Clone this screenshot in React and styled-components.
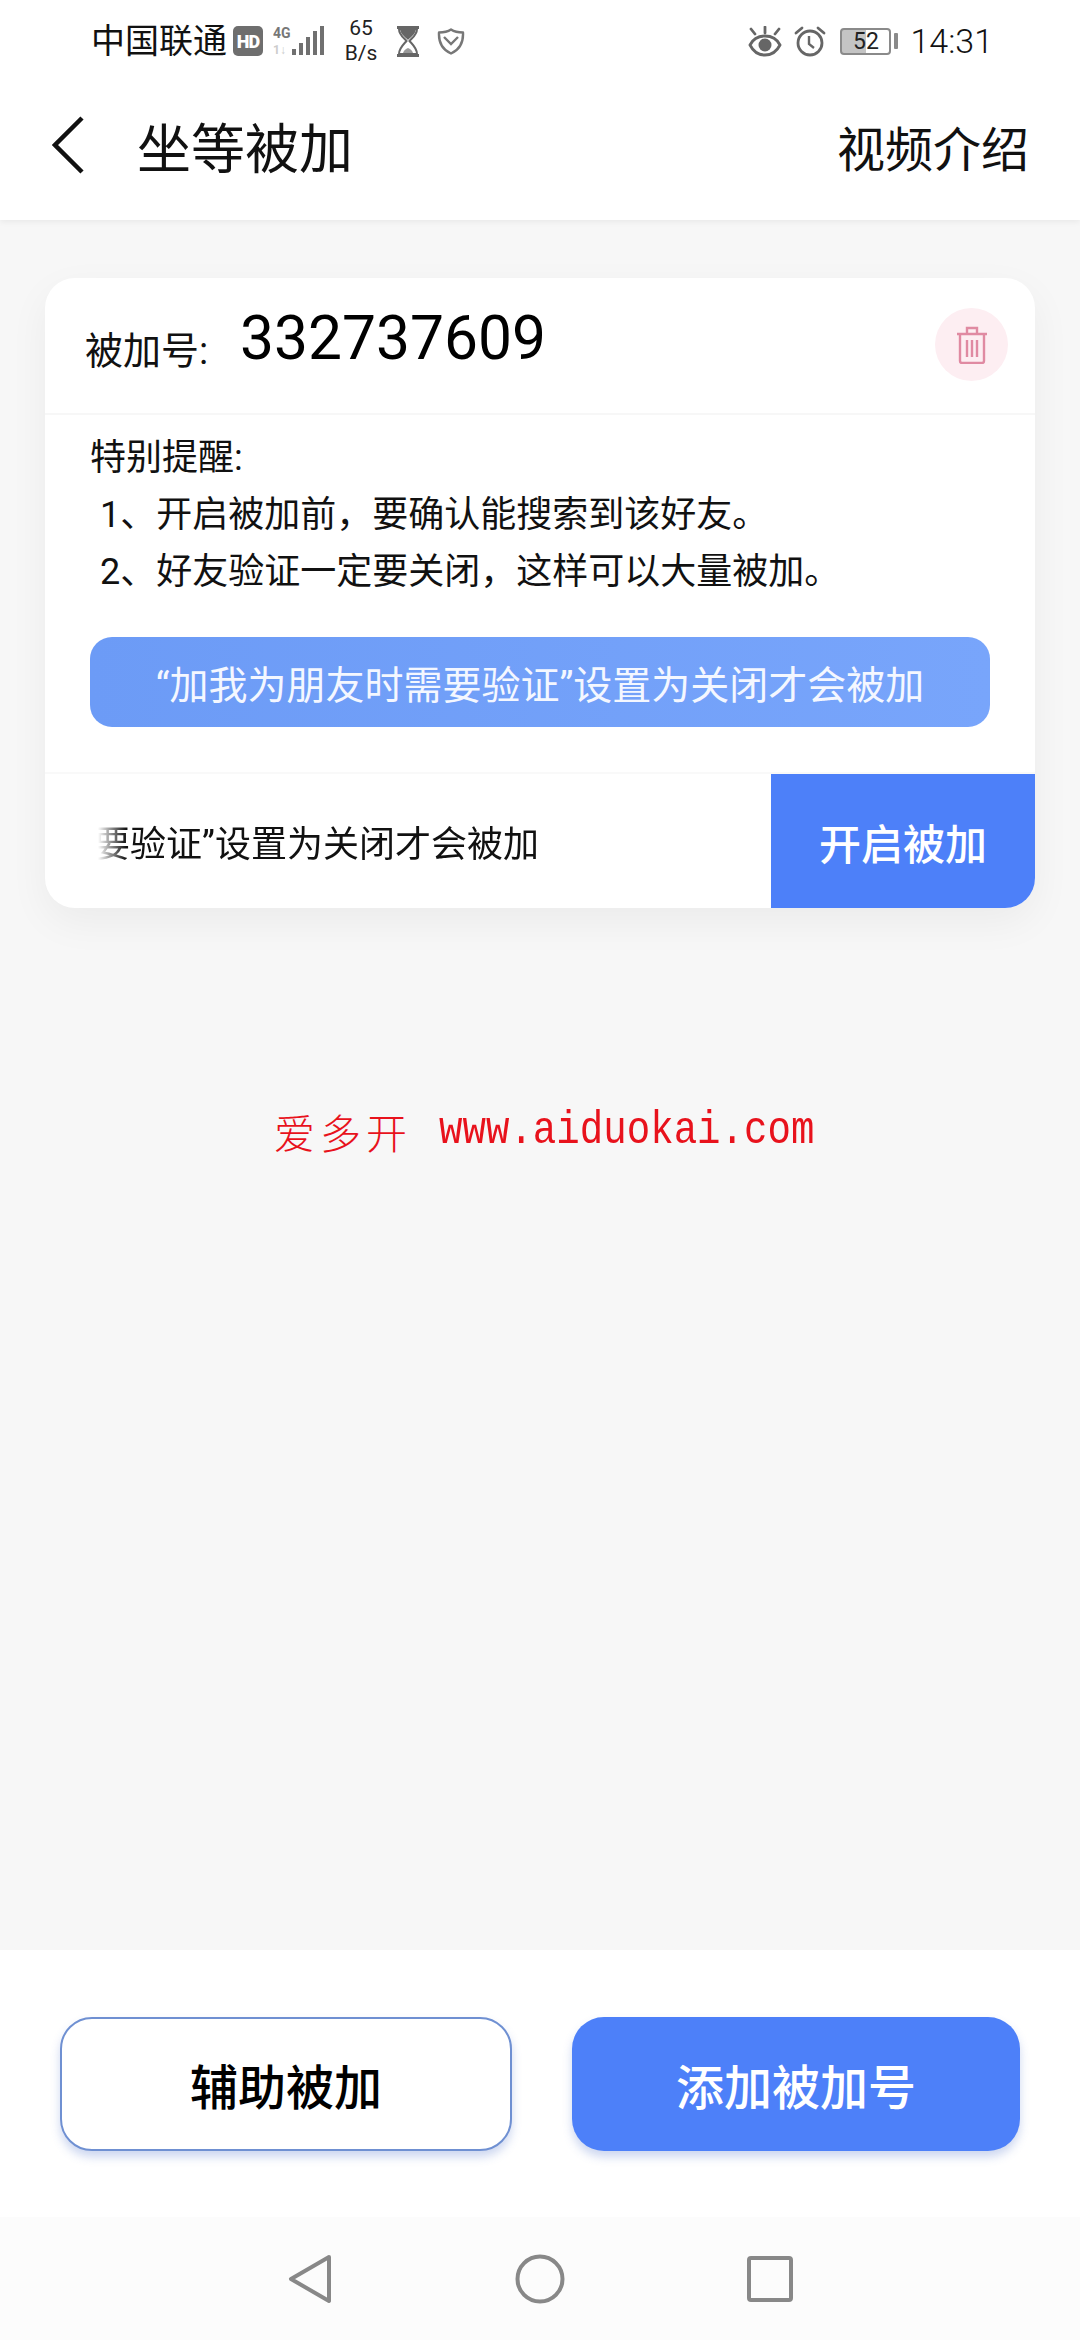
import React from "react";
import styled, { createGlobalStyle } from "styled-components";

const GlobalStyle = createGlobalStyle`
  html, body {
    margin: 0;
    padding: 0;
    background: #f7f7f7;
  }
  * {
    box-sizing: border-box;
  }
`;

const sans = `Roboto, "Noto Sans CJK SC", sans-serif`;
const blue = "#4d80f9";

const Page = styled.div`
  width: 1080px;
  height: 2340px;
  display: flex;
  flex-direction: column;
  font-family: ${sans};
  color: #111;
  overflow: hidden;
`;

const TopBar = styled.header`
  height: 220px;
  background: #fff;
  box-shadow: 0 2px 6px rgba(0, 0, 0, 0.06);
  display: flex;
  flex-direction: column;
  position: relative;
`;

const StatusBar = styled.div`
  height: 82px;
  padding: 0 87px 0 91px;
  display: flex;
  align-items: center;
  justify-content: space-between;
`;

const StatusGroup = styled.div`
  display: flex;
  align-items: center;
`;

const Carrier = styled.span`
  font-size: 34px;
  line-height: 40px;
  white-space: nowrap;
`;

const HdBadge = styled.span`
  width: 30px;
  height: 30px;
  margin-left: 6px;
  border-radius: 5px;
  background: #6e6e6e;
  color: #fff;
  font-size: 18px;
  font-weight: 900;
  letter-spacing: -1px;
  display: flex;
  align-items: center;
  justify-content: center;
`;

const Speed = styled.span`
  width: 40px;
  margin-left: 16px;
  margin-right: 15px;
  font-size: 21px;
  line-height: 25px;
  text-align: center;
  color: #222;
`;

const Icon = styled.svg`
  display: block;
  flex: none;
  margin-left: ${(p) => p.$left || 0}px;
`;

const BatteryBox = styled.span`
  width: 51px;
  height: 27px;
  margin-left: 14px;
  border: 2px solid #8a8a8a;
  border-radius: 4px;
  font-size: 23px;
  line-height: 23px;
  text-align: center;
  color: #222;
  background: linear-gradient(90deg, #c4c4c4 0 52%, #fff 52%);
`;

const BatteryTip = styled.span`
  width: 4px;
  height: 16px;
  margin-left: 3px;
  border-radius: 1px;
  background: #8a8a8a;
`;

const Clock = styled.span`
  margin-left: 12px;
  font-size: 34px;
  font-weight: 300;
  color: #111;
`;

const NavBar = styled.div`
  flex: 1;
  padding: 0 51px 0 52px;
  display: flex;
  align-items: center;
`;

const BackIcon = styled(Icon)`
  margin-bottom: 12px;
`;

const Title = styled.h1`
  margin: 0 0 0 53px;
  font-size: 54px;
  font-weight: 400;
  line-height: 70px;
`;

const VideoLink = styled.span`
  margin-left: auto;
  font-size: 48px;
  line-height: 70px;
`;

const Main = styled.main`
  flex: 1;
  padding: 58px 45px 0;
  background: #f7f7f7;
  display: flex;
  flex-direction: column;
`;

const Card = styled.section`
  height: 630px;
  background: #fff;
  border-radius: 30px;
  box-shadow: 0 14px 40px rgba(0, 0, 0, 0.05);
  display: flex;
  flex-direction: column;
  overflow: hidden;
`;

const NumberRow = styled.div`
  height: 137px;
  padding: 0 27px 0 40px;
  border-bottom: 2px solid #f7f7f7;
  display: flex;
  align-items: center;
`;

const NumberLabel = styled.span`
  width: 155px;
  font-size: 38px;
  margin-top: 3px;
  white-space: nowrap;
`;

const NumberValue = styled.span`
  margin-top: -14px;
  font-size: 60.5px;
  line-height: 70px;
  color: #000;
`;

const TrashButton = styled.div`
  width: 73px;
  height: 73px;
  margin-left: auto;
  margin-top: -2px;
  border-radius: 50%;
  background: #fdeef2;
  display: flex;
  align-items: center;
  justify-content: center;
`;

const Notes = styled.div`
  padding: 15px 45px 0;
  font-size: 36px;
  line-height: 57px;
`;

const NoteLine = styled.div`
  padding-left: ${(p) => (p.$indent ? 10 : 0)}px;
  white-space: nowrap;
`;

const Banner = styled.div`
  height: 90px;
  margin: 36px 45px 0;
  border-radius: 22px;
  background: linear-gradient(90deg, #6c9bf6, #78a5fb);
  color: #f4f7ff;
  font-size: 39px;
  display: flex;
  align-items: center;
  justify-content: center;
`;

const EnableRow = styled.div`
  flex: 1;
  margin-top: 45px;
  border-top: 2px solid #f9f9f9;
  display: flex;
`;

const MarqueeWrap = styled.div`
  width: 441px;
  margin-left: 53px;
  overflow: hidden;
  display: flex;
  align-items: center;
  justify-content: flex-end;
  font-size: 36px;
  white-space: nowrap;
  mask-image: linear-gradient(90deg, transparent 0, #000 28px);
`;

const EnableButton = styled.div`
  width: 264px;
  margin-left: auto;
  background: ${blue};
  color: #fff;
  font-size: 42px;
  font-weight: 500;
  display: flex;
  align-items: center;
  justify-content: center;
`;

const Watermark = styled.div`
  margin-top: 193px;
  margin-left: 229px;
  display: flex;
  align-items: center;
  color: #e8121c;
  white-space: nowrap;
`;

const WatermarkName = styled.span`
  font-family: "Noto Sans CJK SC", serif;
  font-size: 41px;
  font-weight: 300;
  letter-spacing: 5px;
`;

const WatermarkUrl = styled.span`
  margin-left: 27px;
  font-family: "Liberation Mono", monospace;
  font-size: 46px;
  transform: scaleX(0.85);
  transform-origin: left center;
`;

const ActionPanel = styled.div`
  height: 267px;
  padding: 67px 60px 0;
  background: #fff;
  display: flex;
  gap: 60px;
  align-items: flex-start;
`;

const ActionButton = styled.div`
  flex: 1;
  height: 134px;
  border-radius: 32px;
  font-size: 48px;
  font-weight: 500;
  display: flex;
  align-items: center;
  justify-content: center;
  color: ${(p) => (p.$primary ? "#fff" : "#000")};
  background: ${(p) => (p.$primary ? blue : "#fff")};
  border: ${(p) => (p.$primary ? "none" : "2px solid #6f90d2")};
  box-shadow: 0 6px 10px rgba(77, 110, 200, 0.28);
`;

const NavKeys = styled.nav`
  height: 123px;
  background: #fcfcfc;
  display: flex;
  align-items: center;
  justify-content: center;
`;

const KeySlot = styled.div`
  width: 230px;
  display: flex;
  justify-content: center;
`;

const App = () => (
  <Page>
    <GlobalStyle />
    <TopBar>
      <StatusBar>
        <StatusGroup>
          <Carrier>中国联通</Carrier>
          <HdBadge>HD</HdBadge>
          <Icon width="52" height="32" viewBox="0 0 52 32" $left={10}>
            <text x="0" y="13" fontSize="14" fontWeight="700" fill="#777" fontFamily="Roboto">4G</text>
            <text x="0" y="29" fontSize="12" fontWeight="700" fill="#ccc" fontFamily="Roboto">1↓</text>
            <g fill="#707070">
              <rect x="19" y="24" width="4" height="6" />
              <rect x="26" y="18" width="4" height="12" />
              <rect x="33" y="12" width="4" height="18" />
              <rect x="40" y="6" width="4" height="24" />
              <rect x="47" y="1" width="4" height="29" />
            </g>
          </Icon>
          <Speed>65<br />B/s</Speed>
          <Icon width="24" height="31" viewBox="0 0 24 31">
            <path d="M1 1.5h22M1 29.5h22" stroke="#666" strokeWidth="3" />
            <path d="M3 3h18c0 6-5 9-7.5 12C16 18 21 22 21 28H3c0-6 5-10 7.5-13C8 12 3 9 3 3z" fill="#fff" stroke="#666" strokeWidth="2" />
            <path d="M4 3h16c-.5 5-5 8-8 11C9 11 4.500 8 4 3z" fill="#666" />
            <path d="M7 27c1-3 3-4 5-5 2 1 4 2 5 5z" fill="#999" />
          </Icon>
          <Icon width="28" height="27" viewBox="0 0 28 27" $left={17}>
            <path d="M14 1.500c3 2 7 3 12 3 .5 10-3 17-12 21C5 21.500 1.500 14.500 2 4.500c5 0 9-1 12-3z" fill="none" stroke="#777" strokeWidth="2.400" strokeLinejoin="round" />
            <path d="M7 9l7 7 7-7" fill="none" stroke="#777" strokeWidth="2.400" />
          </Icon>
        </StatusGroup>
        <StatusGroup>
          <Icon width="34" height="31" viewBox="0 0 34 31">
            <path d="M2 19c3-6 8-9 15-9s12 3 15 9c-3 6-8 10-15 10S5 25 2 19z" fill="none" stroke="#666" strokeWidth="2.800" />
            <circle cx="17" cy="19" r="6.500" fill="#666" />
            <path d="M17 1v6M3 3l4 5M31 3l-4 5" stroke="#666" strokeWidth="2.800" strokeLinecap="round" />
          </Icon>
          <Icon width="32" height="31" viewBox="0 0 32 31" $left={12}>
            <circle cx="16" cy="17" r="12" fill="none" stroke="#666" strokeWidth="2.800" />
            <path d="M15 10v8l5 4" fill="none" stroke="#666" strokeWidth="2.400" />
            <path d="M2 7l6-5M30 7l-6-5" stroke="#666" strokeWidth="2.800" strokeLinecap="round" />
          </Icon>
          <BatteryBox>52</BatteryBox>
          <BatteryTip />
          <Clock>14:31</Clock>
        </StatusGroup>
      </StatusBar>
      <NavBar>
        <BackIcon width="32" height="58" viewBox="0 0 32 58">
          <path d="M30 2L3 29l27 27" fill="none" stroke="#111" strokeWidth="4.500" />
        </BackIcon>
        <Title>坐等被加</Title>
        <VideoLink>视频介绍</VideoLink>
      </NavBar>
    </TopBar>

    <Main>
      <Card>
        <NumberRow>
          <NumberLabel>被加号:</NumberLabel>
          <NumberValue>332737609</NumberValue>
          <TrashButton>
            <Icon width="32" height="38" viewBox="0 0 32 38">
              <g fill="none" stroke="#e08aa2" strokeWidth="2.400">
                <path d="M1 8h30M11 8V2h10v6" />
                <path d="M4 8v27a2 2 0 0 0 2 2h20a2 2 0 0 0 2-2V8" />
                <path d="M11 14v17M16 14v17M21 14v17" />
              </g>
            </Icon>
          </TrashButton>
        </NumberRow>
        <Notes>
          <NoteLine>特别提醒:</NoteLine>
          <NoteLine $indent>1、开启被加前，要确认能搜索到该好友。</NoteLine>
          <NoteLine $indent>2、好友验证一定要关闭，这样可以大量被加。</NoteLine>
        </Notes>
        <Banner>“加我为朋友时需要验证”设置为关闭才会被加</Banner>
        <EnableRow>
          <MarqueeWrap>“加我为朋友时需要验证”设置为关闭才会被加</MarqueeWrap>
          <EnableButton>开启被加</EnableButton>
        </EnableRow>
      </Card>
      <Watermark>
        <WatermarkName>爱多开</WatermarkName>
        <WatermarkUrl>www.aiduokai.com</WatermarkUrl>
      </Watermark>
    </Main>

    <ActionPanel>
      <ActionButton>辅助被加</ActionButton>
      <ActionButton $primary>添加被加号</ActionButton>
    </ActionPanel>

    <NavKeys>
      <KeySlot>
        <Icon width="44" height="50" viewBox="0 0 44 50">
          <path d="M41 3L3 25l38 22z" fill="none" stroke="#888" strokeWidth="4" strokeLinejoin="round" />
        </Icon>
      </KeySlot>
      <KeySlot>
        <Icon width="50" height="50" viewBox="0 0 50 50">
          <circle cx="25" cy="25" r="22.500" fill="none" stroke="#888" strokeWidth="4" />
        </Icon>
      </KeySlot>
      <KeySlot>
        <Icon width="46" height="46" viewBox="0 0 46 46">
          <rect x="2" y="2" width="42" height="42" rx="2" fill="none" stroke="#888" strokeWidth="4" />
        </Icon>
      </KeySlot>
    </NavKeys>
  </Page>
);

export default App;
